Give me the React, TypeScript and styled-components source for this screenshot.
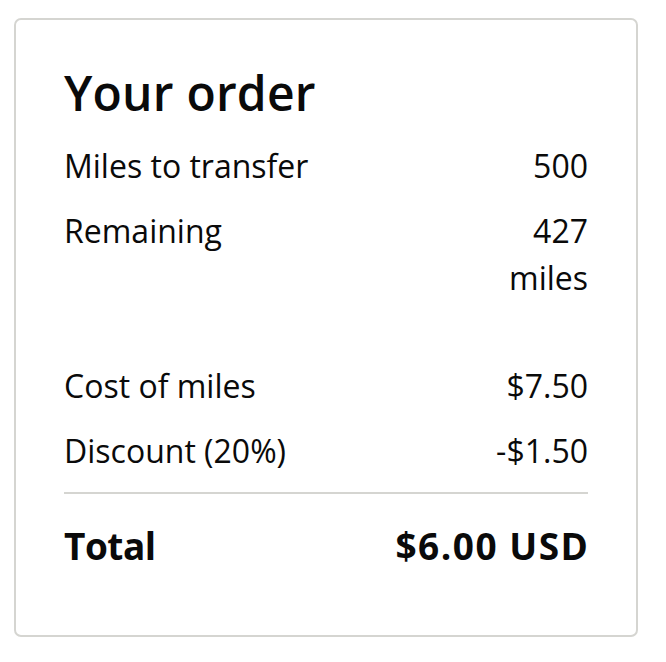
import styled, { createGlobalStyle } from 'styled-components'

const GlobalStyle = createGlobalStyle`
    body {
        margin: 0;
        background: #ffffff;
        font-family: 'Open Sans', 'Noto Sans', sans-serif;
        color: #0a0a0a;
    }
`

type Line = { label: string; value: string }

const groups: Line[][] = [
    [
        { label: 'Miles to transfer', value: '500' },
        { label: 'Remaining', value: '427 miles' },
    ],
    [
        { label: 'Cost of miles', value: '$7.50' },
        { label: 'Discount (20%)', value: '-$1.50' },
    ],
]

export default function App() {
    return (
        <>
            <GlobalStyle />
            <Page>
                <Card>
                    <Title>Your order</Title>
                    {groups.map((group, i) => (
                        <Group key={i}>
                            {group.map((line) => (
                                <Row key={line.label}>
                                    <span>{line.label}</span>
                                    <Value>{line.value}</Value>
                                </Row>
                            ))}
                        </Group>
                    ))}
                    <Divider />
                    <TotalRow>
                        <TotalLabel>Total</TotalLabel>
                        <TotalValue>$6.00 USD</TotalValue>
                    </TotalRow>
                </Card>
            </Page>
        </>
    )
}

const Page = styled.div`
    padding: 18px 28px 25px 14px;
`

const Card = styled.div`
    border: 2px solid #d5d5d1;
    border-radius: 7px;
    padding: 40px 48px 64px;
    display: flex;
    flex-direction: column;
`

const Title = styled.h1`
    margin: 0 0 16px;
    font-size: 48px;
    font-weight: 600;
    line-height: 66px;
    letter-spacing: 0.2px;
`

const Group = styled.div`
    display: flex;
    flex-direction: column;
    gap: 18px;
    & + & {
        margin-top: 61px;
    }
`

const Row = styled.div`
    display: flex;
    justify-content: space-between;
    align-items: flex-start;
    gap: 24px;
    font-size: 32px;
    line-height: 47px;
`

const Value = styled.span`
    text-align: right;
    max-width: 100px;
`

const Divider = styled.hr`
    margin: 18px 0 0;
    border: none;
    border-top: 2px solid #d5d5d1;
`

const TotalRow = styled.div`
    display: flex;
    justify-content: space-between;
    align-items: baseline;
    font-size: 37px;
    font-weight: 700;
    line-height: 50px;
    margin-top: 27px;
`

const TotalLabel = styled.span`
    letter-spacing: -0.5px;
`

const TotalValue = styled.span`
    letter-spacing: 1.5px;
    margin-right: -1.5px;
`
